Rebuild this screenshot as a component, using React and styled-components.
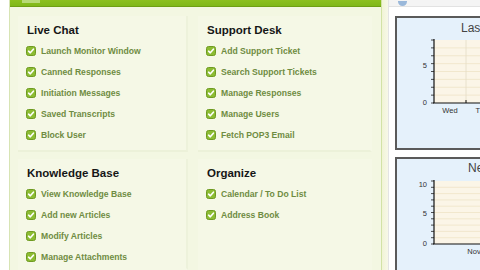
import React from "react";
import styled, { createGlobalStyle } from "styled-components";

const Global = createGlobalStyle`
  html, body { margin: 0; padding: 0; background: #ffffff; }
  body { width: 480px; height: 270px; overflow: hidden; font-family: "Liberation Sans", Arial, sans-serif; }
  #root { width: 480px; height: 270px; }
`;

const Page = styled.div`
  display: flex;
  width: 480px;
  height: 270px;
  padding-left: 9px;
  box-sizing: border-box;
  background: #ffffff;
`;

const GreenPanel = styled.section`
  width: 373px;
  flex: none;
  display: flex;
  flex-direction: column;
  border-left: 1px solid #d7e4b4;
  border-right: 1px solid #d2e2a6;
  box-sizing: border-box;
  background: #f3f7e2;
`;

const GreenHeader = styled.div`
  height: 7px;
  flex: none;
  background: linear-gradient(#8cc020, #80b81a);
  border-bottom: 1px solid #6f9f14;
  box-sizing: border-box;
  padding-left: 12px;
`;

const HeaderIcon = styled.div`
  width: 18px;
  height: 3px;
  background: #b8da78;
`;

const Body = styled.div`
  flex: 1;
  display: grid;
  grid-template-columns: 170px 174px;
  grid-template-rows: 136px auto;
  column-gap: 10px;
  row-gap: 7px;
  padding: 9px 0 0 8px;
`;

const Card = styled.div`
  padding: 8px 0 0 9px;
  background: #f5f8e6;
  border-right: 2px solid ${(p) => (p.$edge ? "#edf2db" : "transparent")};
  border-bottom: 2px solid ${(p) => (p.$bottom ? "#ecf1d9" : "transparent")};
  box-sizing: border-box;
`;

const Heading = styled.h3`
  margin: 0 0 3px 0;
  font-family: "Liberation Sans", Arial, sans-serif;
  font-weight: bold;
  font-size: 11.5px;
  line-height: 13px;
  color: #161616;
`;

const List = styled.ul`
  list-style: none;
  margin: 0;
  padding: 0;
`;

const Item = styled.li`
  display: flex;
  align-items: center;
  gap: 5px;
  height: 21px;
  font-family: "Liberation Sans", Arial, sans-serif;
  font-weight: bold;
  font-size: 8.6px;
  color: #6f8c42;
  margin-left: -1px;
`;

const Check = () => (
  <svg width="10" height="10" viewBox="0 0 10 10">
    <rect x="0.5" y="0.5" width="9" height="9" rx="2" fill="#8cbc32" stroke="#6f9a22" />
    <path d="M2.6 5.2 L4.3 6.8 L7.4 3.2" fill="none" stroke="#ffffff" strokeWidth="1.6" strokeLinecap="round" strokeLinejoin="round" />
  </svg>
);

const Section = ({ title, items, edge, bottom }) => (
  <Card $edge={edge} $bottom={bottom}>
    <Heading>{title}</Heading>
    <List>
      {items.map((t) => (
        <Item key={t}>
          <Check />
          <span>{t}</span>
        </Item>
      ))}
    </List>
  </Card>
);

const Gutter = styled.div`
  width: 6px;
  flex: none;
  background: linear-gradient(to right, #f1f4d6, #f7f8e8);
`;

const RightPanel = styled.section`
  flex: 1;
  display: flex;
  flex-direction: column;
  border-left: 1px solid #e4e4e4;
  background: #ffffff;
  padding-left: 6px;
  min-width: 0;
`;

const RightHeader = styled.div`
  height: 6px;
  flex: none;
  display: flex;
  align-items: flex-end;
  padding-left: 9px;
  margin-left: -6px;
  border-bottom: 1px solid #e2e2e2;
  background: #f4f4f4;
`;

const Dot = styled.div`
  width: 9px;
  height: 5px;
  border-radius: 0 0 5px 5px;
  background: #9ab8da;
`;

const ChartBox = styled.div`
  margin-top: ${(p) => p.$top}px;
  height: ${(p) => p.$h}px;
  flex: none;
  width: 100px;
  border-left: 2px solid #5a5a5a;
  border-top: 2px solid #5a5a5a;
  border-bottom: ${(p) => (p.$bottomBorder ? "2px solid #5a5a5a" : "none")};
  background: #e5f1fb;
  box-sizing: border-box;
  overflow: hidden;
`;

const Grid = ({ x, y, w, h, n }) => {
  const lines = [];
  for (let i = 1; i < n; i++) {
    const yy = y + (h * i) / n;
    lines.push(<line key={i} x1={x} x2={x + w} y1={yy} y2={yy} stroke="#efe3c6" strokeWidth="0.8" />);
  }
  return lines;
};

const Ticks = ({ x, y, h, n }) => {
  const t = [];
  for (let i = 0; i <= n; i++) {
    const yy = y + (h * i) / n;
    t.push(<line key={i} x1={x - 3} x2={x} y1={yy} y2={yy} stroke="#222" strokeWidth="0.8" />);
  }
  return t;
};

const Chart1 = () => (
  <svg width="98" height="132" viewBox="0 0 98 132">
    <text x="64" y="14" fontFamily="Liberation Sans, Arial, sans-serif" fontSize="12" fill="#444">Last</text>
    <rect x="37" y="22" width="70" height="63" fill="#fbf5e7" />
    <Grid x={37} y={22} w={70} h={63} n={8} />
    <line x1="69" x2="69" y1="22" y2="85" stroke="#e4dcc6" strokeWidth="0.8" />
    <Ticks x={37} y={22} h={63} n={8} />
    <line x1="37" x2="37" y1="21" y2="85" stroke="#111" strokeWidth="1.2" />
    <line x1="36" x2="110" y1="85" y2="85" stroke="#111" strokeWidth="1.2" />
    <line x1="69" x2="69" y1="82" y2="85" stroke="#111" strokeWidth="1" />
    <text x="30" y="50" textAnchor="end" fontFamily="Liberation Sans, Arial, sans-serif" fontSize="7.5" fill="#333">5</text>
    <text x="30" y="87" textAnchor="end" fontFamily="Liberation Sans, Arial, sans-serif" fontSize="7.5" fill="#333">0</text>
    <text x="53" y="95" textAnchor="middle" fontFamily="Liberation Sans, Arial, sans-serif" fontSize="7.5" fill="#333">Wed</text>
    <text x="85" y="95" textAnchor="middle" fontFamily="Liberation Sans, Arial, sans-serif" fontSize="7.5" fill="#333">Thu</text>
  </svg>
);

const Chart2 = () => (
  <svg width="98" height="112" viewBox="0 0 98 112">
    <text x="71" y="13" fontFamily="Liberation Sans, Arial, sans-serif" fontSize="12" fill="#444">New</text>
    <rect x="37" y="22" width="70" height="63" fill="#fbf5e7" />
    <Grid x={37} y={22} w={70} h={63} n={10} />
    <Ticks x={37} y={22} h={63} n={10} />
    <line x1="37" x2="37" y1="21" y2="85" stroke="#111" strokeWidth="1.2" />
    <line x1="36" x2="110" y1="85" y2="85" stroke="#111" strokeWidth="1.2" />
    <text x="30" y="28" textAnchor="end" fontFamily="Liberation Sans, Arial, sans-serif" fontSize="7.5" fill="#333">10</text>
    <text x="30" y="57" textAnchor="end" fontFamily="Liberation Sans, Arial, sans-serif" fontSize="7.5" fill="#333">5</text>
    <text x="30" y="87" textAnchor="end" fontFamily="Liberation Sans, Arial, sans-serif" fontSize="7.5" fill="#333">0</text>
    <text x="77" y="95" textAnchor="middle" fontFamily="Liberation Sans, Arial, sans-serif" fontSize="7.5" fill="#333">Nov</text>
  </svg>
);

export default function App() {
  return (
    <>
      <Global />
      <Page>
        <GreenPanel>
          <GreenHeader>
            <HeaderIcon />
          </GreenHeader>
          <Body>
            <Section
              title="Live Chat"
              edge
              bottom
              items={["Launch Monitor Window", "Canned Responses", "Initiation Messages", "Saved Transcripts", "Block User"]}
            />
            <Section
              title="Support Desk"
              bottom
              items={["Add Support Ticket", "Search Support Tickets", "Manage Responses", "Manage Users", "Fetch POP3 Email"]}
            />
            <Section
              title="Knowledge Base"
              edge
              items={["View Knowledge Base", "Add new Articles", "Modify Articles", "Manage Attachments"]}
            />
            <Section title="Organize" items={["Calendar / To Do List", "Address Book"]} />
          </Body>
        </GreenPanel>
        <Gutter />
        <RightPanel>
          <RightHeader>
            <Dot />
          </RightHeader>
          <ChartBox $top={9} $h={134} $bottomBorder>
            <Chart1 />
          </ChartBox>
          <ChartBox $top={7} $h={120}>
            <Chart2 />
          </ChartBox>
        </RightPanel>
      </Page>
    </>
  );
}
